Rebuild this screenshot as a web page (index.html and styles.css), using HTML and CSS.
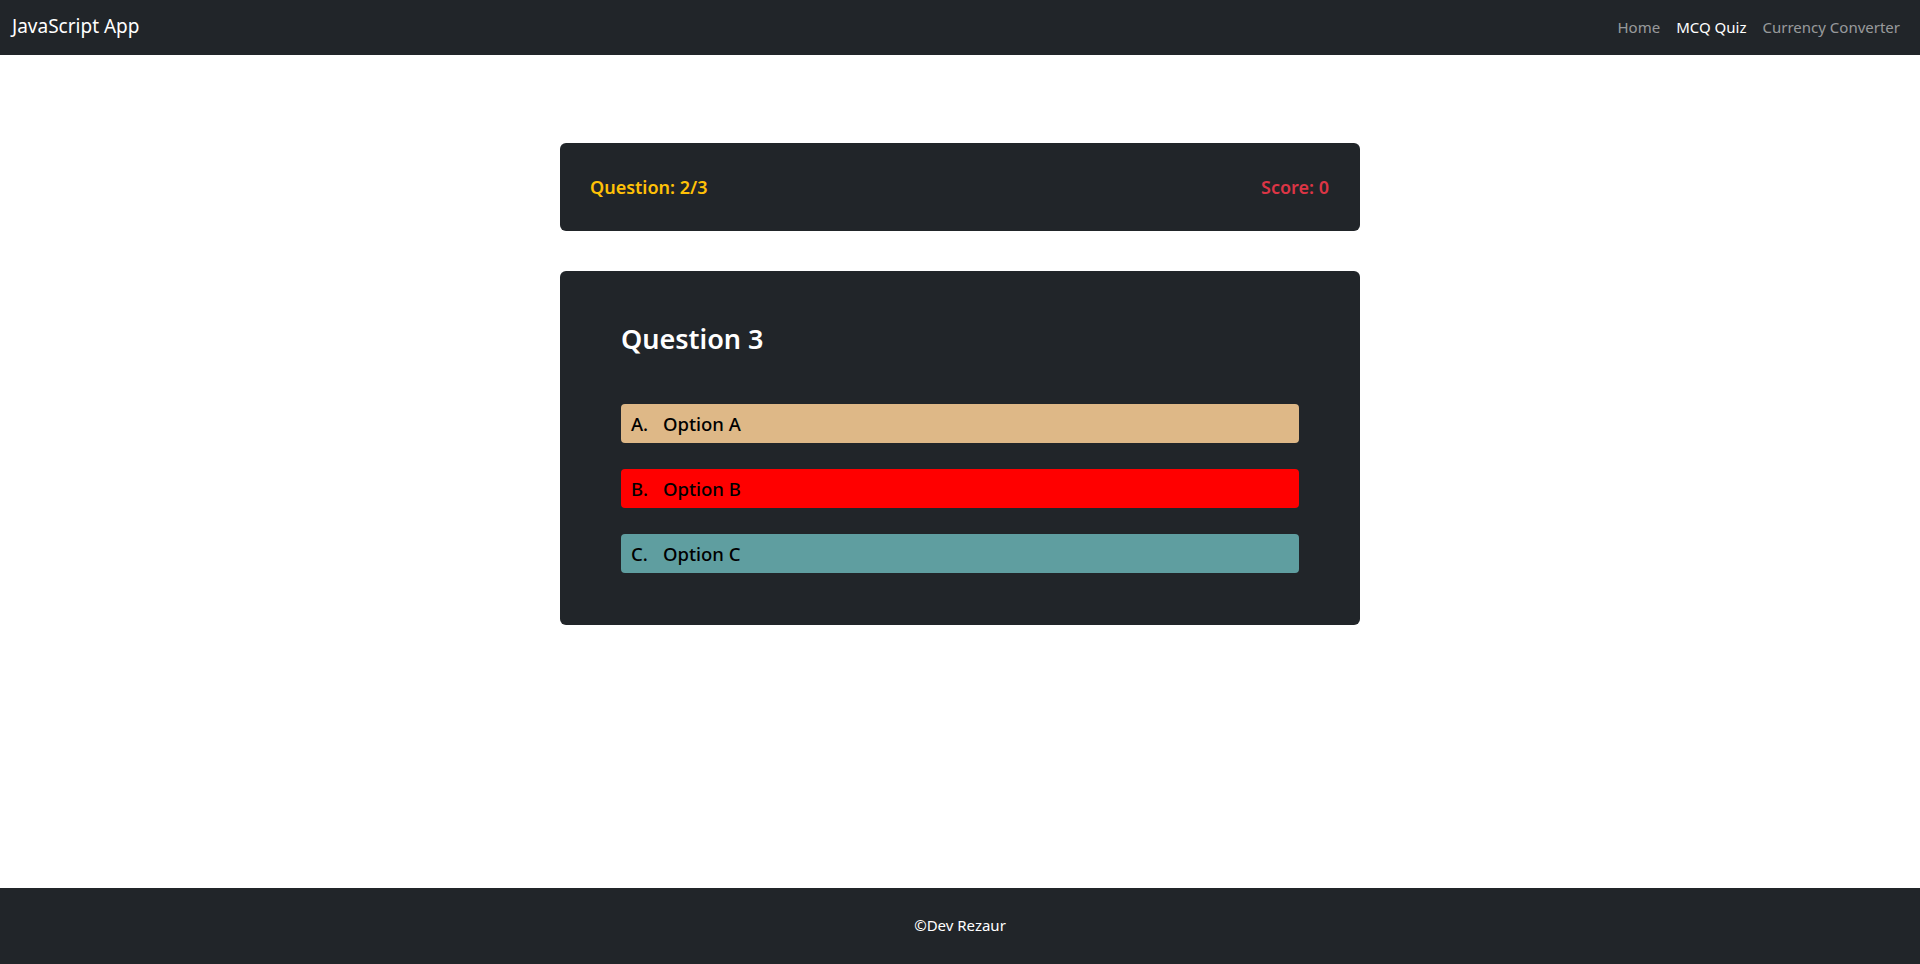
FILE: index.html
```html
<!DOCTYPE html>
<html lang="en">
<head>
<meta charset="utf-8">
<title>JavaScript App</title>
<link rel="stylesheet" href="styles.css">
</head>
<body>
<nav class="navbar">
  <a class="brand" href="#">JavaScript App</a>
  <ul class="nav">
    <li><a class="nav-link" href="#">Home</a></li>
    <li><a class="nav-link active" href="#">MCQ Quiz</a></li>
    <li><a class="nav-link" href="#">Currency Converter</a></li>
  </ul>
</nav>
<main class="main">
  <div class="quiz">
    <div class="status-card">
      <span class="status-question">Question: 2/3</span>
      <span class="status-score">Score: 0</span>
    </div>
    <div class="question-card">
      <h3 class="question-title">Question 3</h3>
      <div class="options">
        <div class="option option-a"><span class="option-letter">A.</span><span>Option A</span></div>
        <div class="option option-b"><span class="option-letter">B.</span><span>Option B</span></div>
        <div class="option option-c"><span class="option-letter">C.</span><span>Option C</span></div>
      </div>
    </div>
  </div>
</main>
<footer class="footer">©Dev Rezaur</footer>
</body>
</html>
```
FILE: styles.css
```css
* { box-sizing: border-box; }
html, body { height: 100%; }
body {
  margin: 0;
  font-family: "Noto Sans", "Open Sans", sans-serif;
  font-size: 16px;
  color: #212529;
  background: #fff;
  display: flex;
  flex-direction: column;
  min-height: 100vh;
}
a { text-decoration: none; }

.navbar {
  height: 55px;
  background: #212529;
  display: flex;
  align-items: center;
  justify-content: space-between;
  padding: 0 12px;
  flex-shrink: 0;
}
.brand {
  color: #fff;
  font-size: 19px;
  line-height: 1.5;
  margin-top: -2px;
}
.nav {
  list-style: none;
  margin: -2px 0 0;
  padding: 0;
  display: flex;
}
.nav-link {
  display: block;
  padding: 8px 8px;
  font-size: 15px;
  color: rgba(255, 255, 255, 0.55);
}
.nav-link.active { color: #fff; }

.main {
  flex: 1;
  padding-top: 88px;
}
.quiz {
  width: 800px;
  margin: 0 auto;
}
.status-card {
  height: 88px;
  background: #212529;
  border-radius: 6px;
  padding: 0 31px 0 30px;
  display: flex;
  align-items: center;
  justify-content: space-between;
  font-size: 18px;
  font-weight: 600;
  margin-bottom: 40px;
}
.status-question { color: #ffc107; }
.status-score { color: #dc3545; }

.question-card {
  background: #212529;
  border-radius: 6px;
  padding: 52px 61px 52px;
}
.question-title {
  margin: 0 0 49px;
  color: #fff;
  font-size: 27px;
  font-weight: 600;
  line-height: 1.2;
}
.options {
  display: flex;
  flex-direction: column;
  gap: 26px;
}
.option {
  height: 39px;
  border-radius: 4px;
  padding: 0 10px;
  display: flex;
  align-items: center;
  font-size: 18.5px;
  font-weight: 500;
  color: #000;
}
.option-letter {
  width: 32px;
}
.option-a { background: #deb887; }
.option-b { background: #ff0000; }
.option-c { background: #5f9ea0; }

.footer {
  height: 76px;
  flex-shrink: 0;
  background: #212529;
  color: #fff;
  display: flex;
  align-items: center;
  justify-content: center;
  font-size: 15px;
  padding-bottom: 3px;
}
```
